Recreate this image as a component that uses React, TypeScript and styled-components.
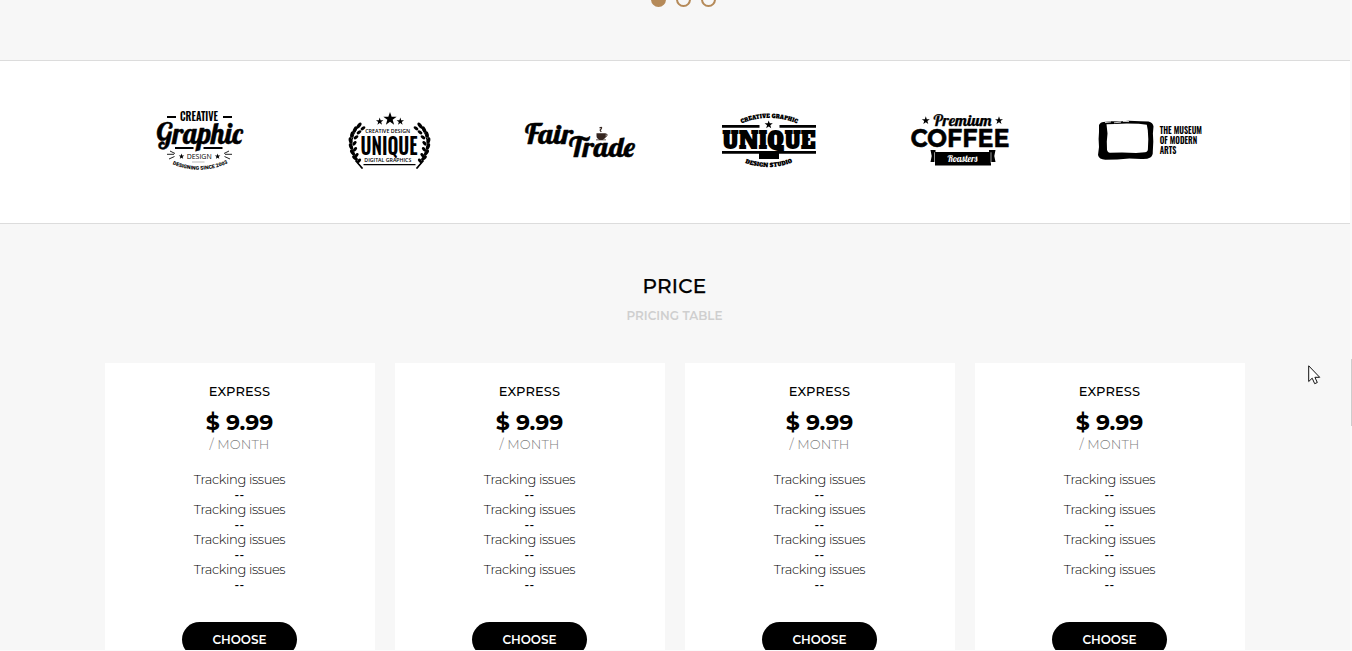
import React from "react";
import styled, { createGlobalStyle } from "styled-components";

const GlobalStyle = createGlobalStyle`
  * { box-sizing: border-box; }
  body { margin: 0; background: #f7f7f7; overflow: hidden; }
`;

const Window = styled.div`
  position: relative;
  display: flex;
  width: 1352px;
  height: 651px;
  overflow: hidden;
  background: #fbfbfb;
  font-family: "Montserrat", "Inter", sans-serif;
  color: #000;
`;

const Page = styled.main`
  width: 1350px;
  height: 650px;
  overflow: hidden;
  background: #f7f7f7;
`;

const ScrollTrack = styled.div`
  width: 2px;
  height: 651px;
  padding: 359px 0 0 1px;
  background: #f9f9f9;
`;

const ScrollThumb = styled.div`
  height: 67px;
  background: #cdcdcd;
`;

const Dots = styled.div`
  display: flex;
  justify-content: center;
  gap: 10px;
  height: 60px;
  padding-left: 17px;
  overflow: hidden;
`;

const Dot = styled.span<{ $active?: boolean }>`
  width: 15px;
  height: 15px;
  margin-top: -8px;
  border: 2px solid #b58a59;
  border-radius: 50%;
  background: ${(p) => (p.$active ? "#b58a59" : "transparent")};
`;

const Brands = styled.section`
  display: flex;
  justify-content: center;
  height: 164px;
  border-top: 1px solid #dcdcdc;
  border-bottom: 1px solid #dcdcdc;
  background: #fff;
`;

const Logo = styled.svg`
  display: block;
  width: 190px;
  height: 162px;
  font-family: "Roboto", sans-serif;
`;

const Heading = styled.header`
  height: 139px;
  padding: 48px 1px 0 0;
  text-align: center;
`;

const Title = styled.h2`
  margin: 0;
  font-size: 20px;
  font-weight: 500;
  line-height: 28px;
  letter-spacing: 0.3px;
  -webkit-text-stroke: 0.25px #000;
`;

const Subtitle = styled.p`
  margin: 6px 0 0;
  font-size: 12px;
  font-weight: 600;
  line-height: 20px;
  color: #cfcfcf;
`;

const Cards = styled.section`
  display: grid;
  grid-template-columns: repeat(4, 270px);
  justify-content: center;
  gap: 20px;
`;

const Card = styled.article`
  display: flex;
  flex-direction: column;
  align-items: center;
  height: 340px;
  padding: 18px 1px 0 0;
  background: #fff;
`;

const Plan = styled.h3`
  margin: 0;
  font-size: 13px;
  font-weight: 500;
  line-height: 20px;
  letter-spacing: 0.1px;
`;

const Price = styled.div`
  margin-top: 9px;
  font-size: 22px;
  font-weight: 700;
  line-height: 26px;
  letter-spacing: -0.05px;
`;

const Period = styled.div`
  margin-top: -1px;
  font-size: 13px;
  font-weight: 300;
  line-height: 18px;
  letter-spacing: 0.1px;
  color: #808080;
`;

const Features = styled.ul`
  margin: 19px 0 0;
  padding: 0;
  list-style: none;
  text-align: center;
  font-size: 13px;
  font-weight: 300;
  line-height: 15px;
`;

const Feature = styled.li`
  letter-spacing: -0.36px;
  color: #000;
`;

const Divider = styled.li`
  letter-spacing: 0.3px;
  font-size: 12px;
  font-weight: 500;
  color: #000;
`;

const Choose = styled.button`
  width: 115px;
  height: 35px;
  margin-top: 30px;
  padding: 0;
  border: 0;
  border-radius: 18px;
  background: #000;
  color: #fff;
  font: 600 12px/35px "Montserrat", "Inter", sans-serif;
`;

const Pointer = styled.svg`
  position: absolute;
  left: 1308px;
  top: 365px;
  width: 13px;
  height: 20px;
`;

const script = '"Lobster", "Liberation Serif", serif';
const condensed = '"Oswald", "Roboto", sans-serif';

function Star({ x, y, r }: { x: number; y: number; r: number }) {
  const points = Array.from({ length: 10 }, (_, i) => {
    const a = -Math.PI / 2 + (i * Math.PI) / 5;
    const d = i % 2 ? r * 0.4 : r;
    return `${x + d * Math.cos(a)},${y + d * Math.sin(a)}`;
  }).join(" ");
  return <polygon points={points} />;
}

interface WordProps {
  x: number;
  y: number;
  w: number;
  size: number;
  weight?: number;
  family?: string;
  stroke?: number;
  color?: string;
  children: string;
}

function Word({ x, y, w, size, weight = 700, family, stroke = 0, color = "#000", children }: WordProps) {
  return (
    <text
      x={x}
      y={y}
      textLength={w}
      lengthAdjust="spacingAndGlyphs"
      fontSize={size}
      fontWeight={weight}
      fontFamily={family}
      fill={color}
      stroke={stroke ? color : "none"}
      strokeWidth={stroke}
      strokeLinejoin="round"
    >
      {children}
    </text>
  );
}

interface ArcWordProps {
  id: string;
  d: string;
  w: number;
  size: number;
  family?: string;
  weight?: number;
  children: string;
}

function ArcWord({ id, d, w, size, family, weight = 900, children }: ArcWordProps) {
  return (
    <>
      <path id={id} d={d} fill="none" />
      <text fontSize={size} fontWeight={weight} fontFamily={family}>
        <textPath href={`#${id}`} textLength={w} lengthAdjust="spacingAndGlyphs">
          {children}
        </textPath>
      </text>
    </>
  );
}

function GraphicLogo() {
  return (
    <Logo viewBox="105 61 190 162">
      <Word x={180} y={121} w={38} size={11.500} weight={600} family={condensed}>CREATIVE</Word>
      <path d="M167 116h9v2h-9zM223 116h9v2h-9zM175 147h18.500v2h-18.500zM203.500 147h19v2h-19z" />
      <Word x={156.500} y={143.500} w={86} size={29} weight={400} family={script} stroke={0.5}>Graphic</Word>
      <Word x={186.700} y={159.200} w={25} size={7.6} weight={500} family='"Open Sans"'>DESIGN</Word>
      <Star x={181.500} y={156.500} r={2.9} />
      <Star x={217.600} y={156.500} r={2.9} />
      <path
        d="M170 151l5 2.500M167 154.300h7M169 159l5.500-2.500M229 151l-5 2.500M232 154.300h-7M230 159l-5.500-2.500"
        stroke="#222"
        strokeWidth="1"
      />
      <path d="M192 162h12.500" stroke="#aaa" strokeWidth="0.8" />
      <ArcWord id="since" d="M172.500 164.200Q199 175.500 227 163.800" w={57} size={5.2}>DESIGNING SINCE 2003</ArcWord>
    </Logo>
  );
}

const leaves = [
  [359, 125.5, -52],
  [355, 129.5, -62],
  [352, 134.5, -78],
  [350.5, 140.5, 80],
  [351, 146.5, 68],
  [352.5, 152.5, 55],
  [355, 158, 42],
];

function Laurel() {
  return (
    <g>
      <path d="M360.500 124Q342 145 362 168.500" fill="none" stroke="#000" strokeWidth="1" />
      <path d="M355.500 160.500L362.500 168.500" stroke="#000" strokeWidth="1.7" />
      {leaves.map(([x, y, a]) => (
        <g key={y}>
          <ellipse cx={x} cy={y} rx={3.4} ry={1.8} transform={`rotate(${a} ${x} ${y})`} />
          <ellipse cx={x + 4} cy={y + 2.8} rx={2.7} ry={1.6} transform={`rotate(${a < 0 ? -35 : -50} ${x + 4} ${y + 2.8})`} />
        </g>
      ))}
    </g>
  );
}

function LaurelLogo() {
  return (
    <Logo viewBox="295 61 190 162">
      <Laurel />
      <g transform="translate(779 0) scale(-1 1)">
        <Laurel />
      </g>
      <Star x={390} y={119} r={7} />
      <Star x={379.700} y={121.500} r={3.9} />
      <Star x={400.300} y={121.500} r={3.9} />
      <Word x={365.200} y={133} w={45} size={6} weight={600} family='"Open Sans"'>CREATIVE DESIGN</Word>
      <Word x={360.500} y={155} w={57} size={23.500} weight={600} family={condensed}>UNIQUE</Word>
      <Word x={364.300} y={162.400} w={47} size={6} weight={600} family='"Open Sans"'>DIGITAL GRAPHICS</Word>
      <path d="M363.500 164h52v1.200h-52z" />
    </Logo>
  );
}

function FairTradeLogo() {
  return (
    <Logo viewBox="485 61 190 162">
      <Word x={525} y={144} w={48} size={28} weight={400} family={script} stroke={0.5}>Fair</Word>
      <Word x={569} y={157.300} w={66} size={28} weight={400} family={script} stroke={0.5}>Trade</Word>
      <g fill="#35251f">
        <path d="M596.500 133.200h9.300v2.800q0 3-3.200 3.400h-3q-3.100-.4-3.100-3.400zM596 139.500h10v.8h-10z" />
        <path d="M605.500 134.200h1.500q1 1.800-2 3" fill="none" stroke="#35251f" strokeWidth="0.9" />
        <path d="M599.500 128q2.500-1.500 2 0t-1 1.500q-1 .5.800 2.300" fill="none" stroke="#35251f" strokeWidth="1.2" />
      </g>
    </Logo>
  );
}

function UniqueLogo() {
  const slab = '"Alfa Slab One", "DejaVu Serif", serif';
  return (
    <Logo viewBox="675 61 190 162">
      <ArcWord id="creative" d="M741.500 123.500Q769 112.500 796.500 123.300" w={57} size={5.8} weight={400} family={slab}>CREATIVE GRAPHIC</ArcWord>
      <Star x={768.700} y={124.700} r={4.3} />
      <path d="M722 125h37.500v2.700H722zM779.500 125H816v2.700h-36.500zM722 151h94v2.800h-94zM759 153.500h20v5.500h-20z" />
      <Word x={722.300} y={148.600} w={93.500} size={23.500} weight={400} family={slab}>UNIQUE</Word>
      <ArcWord id="studio" d="M745 163Q769 171.500 792.500 162.500" w={48.500} size={5.8} weight={400} family={slab}>DESIGN STUDIO</ArcWord>
    </Logo>
  );
}

function CoffeeLogo() {
  return (
    <Logo viewBox="865 61 190 162">
      <Star x={925.800} y={120.500} r={4.2} />
      <Star x={999} y={120.500} r={4.2} />
      <Word x={933.500} y={125.700} w={58} size={15.500} weight={400} family={script} stroke={0.25}>Premium</Word>
      <Word x={910.500} y={146.500} w={99} size={24.500} weight={700} family="Montserrat, Lato" stroke={0.5}>COFFEE</Word>
      <path d="M930.500 150h5v2h53.500v-2h6.500l-1.200 6 1.200 6h-4.500v3.500h-56V162h-4.500l1.200-6z" />
      <path d="M934.500 152.300v11M991 152.300v11" stroke="#fff" strokeWidth="0.6" />
      <Word x={947.500} y={162.300} w={30} size={10} weight={400} family={script} color="#fff">Roasters</Word>
    </Logo>
  );
}

function MuseumLogo() {
  return (
    <Logo viewBox="1055 61 190 162">
      <path
        fillRule="evenodd"
        d="M1099 125q1.500-3 4.500-3l8-.8 8 .3 9-.7 12 .5 8 .1q4.500 1 5 5l-.6 7 .4 8-.5 10q.3 4-2.500 6-3 2-9 1.600l-12-.4-12 .9-12 .2q-6.300-.1-7.300-4.700l1-8-.4-8 .4-7zM1106.500 124.300l1 9.200-.7 8 .2 8q.3 3 3 3.200l12-.2 14 .5 9-.7q2.800-.3 2.900-3l.4-10-.5-9-1-5.500-8-1-12-.2-12 .4z"
      />
      <path d="M1105 122.600l6-.7M1114 122.800l7-.7M1123 121.400l6 .2" stroke="#fff" strokeWidth="0.8" />
      <Word x={1159.700} y={134} w={42.300} size={9.2} weight={600} family={condensed}>THE MUSEUM</Word>
      <Word x={1159.700} y={144} w={37.500} size={9.2} weight={600} family={condensed}>OF MODERN</Word>
      <Word x={1159.700} y={154} w={16.700} size={9.2} weight={600} family={condensed}>ARTS</Word>
    </Logo>
  );
}

const features = ["Tracking issues", "Tracking issues", "Tracking issues", "Tracking issues"];

function PriceCard() {
  return (
    <Card>
      <Plan>EXPRESS</Plan>
      <Price>$ 9.99</Price>
      <Period>/ MONTH</Period>
      <Features>
        {features.map((f, i) => (
          <React.Fragment key={i}>
            <Feature>{f}</Feature>
            <Divider>--</Divider>
          </React.Fragment>
        ))}
      </Features>
      <Choose>CHOOSE</Choose>
    </Card>
  );
}

export default function App() {
  return (
    <Window>
      <GlobalStyle />
      <Page>
        <Dots>
          <Dot $active />
          <Dot />
          <Dot />
        </Dots>
        <Brands>
          <GraphicLogo />
          <LaurelLogo />
          <FairTradeLogo />
          <UniqueLogo />
          <CoffeeLogo />
          <MuseumLogo />
        </Brands>
        <Heading>
          <Title>PRICE</Title>
          <Subtitle>PRICING TABLE</Subtitle>
        </Heading>
        <Cards>
          {[0, 1, 2, 3].map((i) => (
            <PriceCard key={i} />
          ))}
        </Cards>
      </Page>
      <ScrollTrack>
        <ScrollThumb />
      </ScrollTrack>
      <Pointer viewBox="0 0 13 20">
        <path d="M.7.8v15.700l3.500-3.300 2.500 5.500 2.600-1.200-2.400-5.200h4.800z" fill="#fff" stroke="#111" strokeWidth="1" />
      </Pointer>
    </Window>
  );
}
